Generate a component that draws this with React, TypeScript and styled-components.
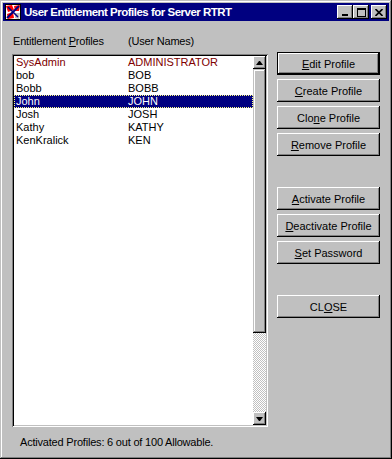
import styled, { createGlobalStyle, css } from 'styled-components'

const GlobalStyle = createGlobalStyle`
  html, body {
    margin: 0;
    padding: 0;
    background: #c0c0c0;
  }
  * {
    box-sizing: border-box;
  }
`

const raised = css`
  box-shadow:
    inset -1px -1px #000000,
    inset 1px 1px #ffffff,
    inset -2px -2px #808080,
    inset 2px 2px #c0c0c0;
`

const Window = styled.div`
  width: 392px;
  height: 459px;
  padding: 3px;
  display: flex;
  flex-direction: column;
  background: #c0c0c0;
  font-family: 'Liberation Sans', Arial, sans-serif;
  font-size: 11px;
  color: #000000;
  box-shadow:
    inset -1px -1px #000000,
    inset 1px 1px #c0c0c0,
    inset -2px -2px #808080,
    inset 2px 2px #ffffff;
`

const TitleBar = styled.div`
  height: 18px;
  display: flex;
  align-items: center;
  padding: 0 2px;
  background: #000080;
  color: #ffffff;
`

const TitleText = styled.span`
  flex: 1;
  margin-left: 3px;
  font-weight: bold;
  font-size: 11.5px;
  letter-spacing: -0.5px;
  white-space: nowrap;
`

const CaptionButton = styled.div<{ $gap?: boolean }>`
  width: 16px;
  height: 14px;
  margin-left: ${({ $gap }) => ($gap ? '2px' : '0')};
  display: flex;
  align-items: center;
  justify-content: center;
  background: #c0c0c0;
  ${raised}
`

const Body = styled.div`
  flex: 1;
  display: flex;
  padding: 14px 8px 0 9px;
`

const LeftColumn = styled.div`
  width: 256px;
  display: flex;
  flex-direction: column;
`

const Labels = styled.div`
  display: grid;
  grid-template-columns: 115px 1fr;
  height: 13px;
  line-height: 13px;
  padding-left: 1px;
  margin-bottom: 6px;
  letter-spacing: -0.2px;
`

const ListBox = styled.div`
  height: 373px;
  display: flex;
  padding: 2px;
  background: #ffffff;
  box-shadow:
    inset 1px 1px #808080,
    inset -1px -1px #ffffff,
    inset 2px 2px #000000,
    inset -2px -2px #c0c0c0;
`

const Rows = styled.div`
  flex: 1;
`

const Row = styled.div<{ $selected?: boolean; $system?: boolean }>`
  display: grid;
  grid-template-columns: 112px 1fr;
  height: 13px;
  line-height: 13px;
  padding-left: 2px;
  white-space: nowrap;
  color: ${({ $selected, $system }) => ($selected ? '#ffffff' : $system ? '#800000' : '#000000')};
  background: ${({ $selected }) => ($selected ? '#000080' : 'transparent')};
  outline: ${({ $selected }) => ($selected ? '1px dotted #ffff80' : 'none')};
  outline-offset: -1px;
`

const ScrollBar = styled.div`
  width: 13px;
  display: flex;
  flex-direction: column;
`

const ArrowButton = styled.div`
  height: 13px;
  display: flex;
  align-items: center;
  justify-content: center;
  background: #c0c0c0;
  ${raised}
`

const Track = styled.div`
  flex: 1;
  display: flex;
  flex-direction: column;
  background-color: #c0c0c0;
  background-image: conic-gradient(#ffffff 25%, #c0c0c0 0 50%, #ffffff 0 75%, #c0c0c0 0);
  background-size: 2px 2px;
`

const Thumb = styled.div`
  height: 264px;
  background: #c0c0c0;
  box-shadow:
    inset -1px -1px #000000,
    inset 1px 1px #c0c0c0,
    inset -2px -2px #808080,
    inset 2px 2px #ffffff;
`

const Status = styled.div`
  margin-top: 9px;
  padding-left: 8px;
  height: 13px;
  line-height: 13px;
  letter-spacing: -0.2px;
  white-space: nowrap;
`

const ButtonColumn = styled.div`
  width: 103px;
  margin-left: 9px;
  padding-top: 17px;
  display: flex;
  flex-direction: column;
  gap: 4px;
`

const Button = styled.div<{ $default?: boolean; $spaced?: boolean }>`
  height: 23px;
  display: flex;
  align-items: center;
  justify-content: center;
  margin-top: ${({ $spaced }) => ($spaced ? '27px' : '0')};
  background: #c0c0c0;
  white-space: nowrap;
  ${({ $default }) =>
    $default
      ? css`
          box-shadow:
            inset 0 0 0 1px #000000,
            inset -2px -2px #000000,
            inset 2px 2px #ffffff,
            inset -3px -3px #808080;
        `
      : raised}

  u {
    text-decoration: underline;
    text-underline-offset: 1px;
  }
`

const profiles = [
  { name: 'SysAdmin', user: 'ADMINISTRATOR', system: true },
  { name: 'bob', user: 'BOB' },
  { name: 'Bobb', user: 'BOBB' },
  { name: 'John', user: 'JOHN', selected: true },
  { name: 'Josh', user: 'JOSH' },
  { name: 'Kathy', user: 'KATHY' },
  { name: 'KenKralick', user: 'KEN' },
]

function AppIcon() {
  return (
    <svg width="16" height="16" viewBox="0 0 16 16">
      <rect x="0" y="0" width="16" height="16" fill="#ffffff" />
      <path d="M1 2 L7 1 L9 6 L3 8 Z" fill="#ff0000" />
      <path d="M9 2 L15 1 L14 7 L10 7 Z" fill="#ff0000" />
      <path d="M2 10 L8 8 L9 14 L3 15 Z" fill="#ff0000" />
      <path d="M10 9 L15 9 L14 15 L10 14 Z" fill="#c0c0c0" />
      <path d="M2 14 L14 2" stroke="#000080" strokeWidth="2" />
      <path d="M3 3 L13 13" stroke="#000080" strokeWidth="1.5" />
      <rect x="0.5" y="0.5" width="15" height="15" fill="none" stroke="#000000" />
    </svg>
  )
}

function ArrowGlyph({ up }: { up?: boolean }) {
  return (
    <svg width="7" height="4" viewBox="0 0 7 4">
      <path d={up ? 'M3 0 L4 0 L7 4 L0 4 Z' : 'M0 0 L7 0 L4 4 L3 4 Z'} fill="#000000" />
    </svg>
  )
}

export default function App() {
  return (
    <>
      <GlobalStyle />
      <Window>
        <TitleBar>
          <AppIcon />
          <TitleText>User Entitlement Profiles for Server RTRT</TitleText>
          <CaptionButton>
            <svg width="8" height="8" viewBox="0 0 8 8">
              <rect x="1" y="6" width="6" height="2" fill="#000" />
            </svg>
          </CaptionButton>
          <CaptionButton>
            <svg width="9" height="9" viewBox="0 0 9 9">
              <rect x="0.5" y="0.5" width="8" height="8" fill="none" stroke="#000" />
              <rect x="0" y="0" width="9" height="2" fill="#000" />
            </svg>
          </CaptionButton>
          <CaptionButton $gap>
            <svg width="8" height="7" viewBox="0 0 8 7">
              <path d="M0.5 0 L7.5 7 M7.5 0 L0.5 7" stroke="#000" strokeWidth="1.6" />
            </svg>
          </CaptionButton>
        </TitleBar>

        <Body>
          <LeftColumn>
            <Labels>
              <span>
                Entitlement <u>P</u>rofiles
              </span>
              <span>(User Names)</span>
            </Labels>
            <ListBox>
              <Rows>
                {profiles.map((p) => (
                  <Row key={p.name} $selected={p.selected} $system={p.system}>
                    <span>{p.name}</span>
                    <span>{p.user}</span>
                  </Row>
                ))}
              </Rows>
              <ScrollBar>
                <ArrowButton>
                  <ArrowGlyph up />
                </ArrowButton>
                <Track>
                  <Thumb />
                </Track>
                <ArrowButton>
                  <ArrowGlyph />
                </ArrowButton>
              </ScrollBar>
            </ListBox>
            <Status>Activated Profiles: 6 out of 100 Allowable.</Status>
          </LeftColumn>

          <ButtonColumn>
            <Button $default>
              <span>
                <u>E</u>dit Profile
              </span>
            </Button>
            <Button>
              <span>
                <u>C</u>reate Profile
              </span>
            </Button>
            <Button>
              <span>
                Clo<u>n</u>e Profile
              </span>
            </Button>
            <Button>
              <span>
                <u>R</u>emove Profile
              </span>
            </Button>
            <Button $spaced>
              <span>
                <u>A</u>ctivate Profile
              </span>
            </Button>
            <Button>
              <span>
                <u>D</u>eactivate Profile
              </span>
            </Button>
            <Button>
              <span>
                <u>S</u>et Password
              </span>
            </Button>
            <Button $spaced>
              <span>
                CL<u>O</u>SE
              </span>
            </Button>
          </ButtonColumn>
        </Body>
      </Window>
    </>
  )
}
